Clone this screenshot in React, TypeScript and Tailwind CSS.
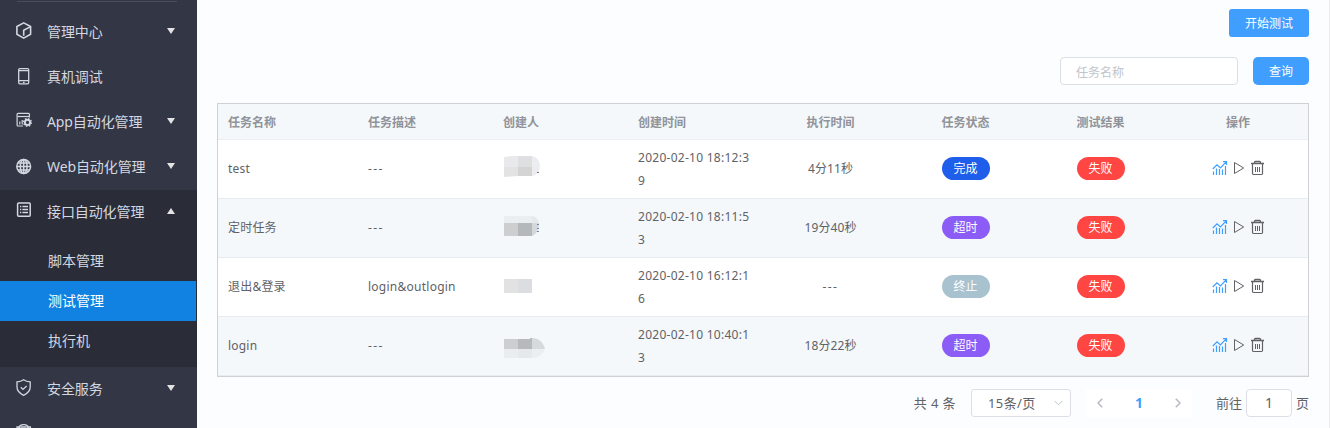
import React from 'react';

interface Task {
  name: string;
  desc: string;
  created: string;
  duration: string;
  status: string;
}

const tasks: Task[] = [
  { name: 'test', desc: '---', created: '2020-02-10 18:12:39', duration: '4分11秒', status: '完成' },
  { name: '定时任务', desc: '---', created: '2020-02-10 18:11:53', duration: '19分40秒', status: '超时' },
  { name: '退出&登录', desc: 'login&outlogin', created: '2020-02-10 16:12:16', duration: '---', status: '终止' },
  { name: 'login', desc: '---', created: '2020-02-10 10:40:13', duration: '18分22秒', status: '超时' },
];

const statusColors: Record<string, string> = {
  完成: 'bg-[#1f5eea]',
  超时: 'bg-[#8b5cf6]',
  终止: 'bg-[#a9c2cf]',
};

const CubeIcon = () => (
  <svg width="16" height="18" viewBox="0 0 16 18" fill="none" stroke="currentColor" strokeWidth="1.6" strokeLinejoin="round">
    <path d="M7.7.9 14.6 4.5V12.3L7.7 16.1.9 12.3V4.5Z" />
    <path d="M14.2 4.9 7.7 8.3V13.7" />
  </svg>
);

const PhoneIcon = () => (
  <svg width="16" height="18" viewBox="0 0 16 18" fill="none" stroke="currentColor" strokeWidth="1.3">
    <rect x="2.7" y="1.6" width="10" height="15.2" rx="1.2" />
    <path d="M3 3.7H12.5M3 13.7H12.5" />
    <path d="M7 15.3H8.6" />
  </svg>
);

const AppIcon = () => (
  <svg width="16" height="18" viewBox="0 0 16 18" fill="none" stroke="currentColor" strokeWidth="1.2">
    <path d="M7 14H2a.9.9 0 0 1-.9-.9V2.2a.9.9 0 0 1 .9-.9H12.5a.9.9 0 0 1 .9.9V5.5" />
    <path d="M1.5 4.5H13.3" />
    <path d="M3.8 9.5V12.5M6.2 8V12.5" />
    <circle cx="11.5" cy="10.4" r="2.6" strokeWidth="1.9" />
    <circle cx="11.5" cy="10.4" r="3.9" strokeWidth="1.3" strokeDasharray="1.53 1.53" />
  </svg>
);

const GlobeIcon = () => (
  <svg width="16" height="18" viewBox="0 0 16 18" fill="none" stroke="currentColor" strokeWidth="1.5">
    <circle cx="7.7" cy="9.5" r="6.9" />
    <ellipse cx="7.7" cy="9.5" rx="3.4" ry="6.9" />
    <path d="M7.7 2.5V16.5M.8 9.5H14.6M2 6H13.4M2 13H13.4" />
  </svg>
);

const ListIcon = () => (
  <svg width="16" height="18" viewBox="0 0 16 18" fill="none" stroke="currentColor" strokeWidth="1.3">
    <rect x="1.6" y=".9" width="12.6" height="13.4" rx="1" strokeWidth="1.5" />
    <path d="M4 4.5H5.3M4 7.5H5.3M4 10.5H5.3M6.4 4.5H12M6.4 7.5H12M6.4 10.5H12" />
  </svg>
);

const ShieldIcon = () => (
  <svg width="16" height="18" viewBox="0 0 16 18" fill="none" stroke="currentColor" strokeWidth="1.3">
    <path d="M7.6.8C9.5 2.2 11.5 2.8 14.2 2.9V8.1C14.2 12 11.8 14.4 7.6 16.4 3.4 14.4 1 12 1 8.1V2.9C3.7 2.8 5.7 2.2 7.6.8Z" />
    <path d="M4.8 8.2 7 10.4 10.6 7" />
  </svg>
);

const RobotIcon = () => (
  <svg width="16" height="18" viewBox="0 0 16 18" fill="none" stroke="currentColor" strokeWidth="1.3">
    <path d="M3 4.5C3 2.3 4.6.7 7.7.7S12.4 2.3 12.4 4.5" />
    <path d="M1 3H3.6V11H1ZM11.8 3H14.4V11H11.8ZM4.6 3H10.8" />
  </svg>
);

const ChartIcon = () => (
  <svg width="16" height="16" viewBox="0 0 16 16" fill="none" stroke="#409eff" strokeWidth="1.2">
    <path d="M1.5 15V11.5M4.5 15V8.5M7.5 15V9M10.5 15V9.5M13.5 15V6" />
    <path d="M.8 9 5 4.8 8.4 8 14 2.2M11 1.6H14.5V5" />
  </svg>
);

const PlayIcon = () => (
  <svg width="12" height="16" viewBox="0 0 12 16" fill="none" stroke="#606266" strokeWidth="1" strokeLinejoin="round">
    <path d="M1.5 2.5 10.7 8 1.5 13.5Z" />
  </svg>
);

const TrashIcon = () => (
  <svg width="15" height="16" viewBox="0 0 15 16" fill="none" stroke="#606266" strokeWidth="1">
    <path d="M1 3.5H14M4.5 3.2V2.4A.9.9 0 0 1 5.4 1.5H9.6A.9.9 0 0 1 10.5 2.4V3.2" strokeWidth="1.3" />
    <path d="M2.5 4V13.4A1.1 1.1 0 0 0 3.6 14.5H11.4A1.1 1.1 0 0 0 12.5 13.4V4" strokeWidth="1.2" />
    <path d="M5.5 7V12M7.5 7V12M9.5 7V12" />
  </svg>
);

// pixelated creator names
const mosaics = [
  <>
    <path d="M1 1 8 0H15V11H1Z" fill="#e9e9eb" />
    <path d="M15 0H29V11H15Z" fill="#dedfe1" />
    <path d="M29 0C34 1 37 5 37 11H29Z" fill="#ecedf0" />
    <path d="M1 11H15V20L1 21Z" fill="#e3e3e3" />
    <path d="M15 11H29V20H15Z" fill="#d4d4d5" />
    <path d="M29 11H37C36 16 34 19 29 20Z" fill="#ececee" />
    <path d="M34 16H36V17H34Z" fill="#5c7894" />
  </>,
  <>
    <path d="M1 1H29V8H1Z" fill="#ebeef1" />
    <path d="M29 1C33 2 35 4 36 8H29Z" fill="#e5e9ed" />
    <path d="M1 8H15V21H1Z" fill="#cdced0" />
    <path d="M15 8H29V21H15Z" fill="#b4b8bb" />
    <path d="M29 8H36C36 14 34 19 29 21Z" fill="#d4d8dd" />
    <path d="M34 9H36V10H34ZM34 13H36V14H34ZM34 16H36V17H34Z" fill="#6f8ba8" />
  </>,
  <>
    <path d="M1 5H15V19H1Z" fill="#e2e2e3" />
    <path d="M15 5H29V19H15Z" fill="#dcdde0" />
  </>,
  <>
    <path d="M1 6H15V16H1Z" fill="#cdced0" />
    <path d="M15 6H27V5H29V16H15Z" fill="#b6babd" />
    <path d="M29 5C36 5 40 9 42 16H29Z" fill="#d6dade" />
    <path d="M1 16H15V25H1Z" fill="#e9edf0" />
    <path d="M15 16H29V25H15Z" fill="#e6e9eb" />
    <path d="M29 16H42C40 22 35 25 29 25Z" fill="#ebeff2" />
  </>,
];

interface MenuProps {
  icon: React.ReactNode;
  label: string;
  arrow?: 'up' | 'down';
}

function MenuItem({ icon, label, arrow }: MenuProps) {
  return (
    <div className="flex h-[45px] shrink-0 items-center pl-4 text-[#d3d7e0]">
      <span className="mb-1 w-[31px]">{icon}</span>
      <span className="flex-1 pb-0.5 text-sm tracking-[-0.1px]">{label}</span>
      {arrow && (
        <svg className="mr-[22px] mb-[3px]" width="8" height="6" viewBox="0 0 8 6" fill="#e3e3e3">
          {arrow === 'down' ? <path d="M0 0H8L4 6Z" /> : <path d="M0 6H8L4 0Z" />}
        </svg>
      )}
    </div>
  );
}

function Tag({ text, color }: { text: string; color: string }) {
  return (
    <span className={`mx-auto flex h-[23px] w-12 items-center justify-center rounded-full text-white ${color}`}>
      {text}
    </span>
  );
}

export default function App() {
  return (
    <div className="flex h-[428px] w-[1330px] overflow-hidden bg-[#fcfdff] font-['Noto_Sans','Noto_Sans_CJK_SC',sans-serif] text-xs text-[#606266]">
      <aside className="flex w-[197px] shrink-0 flex-col overflow-hidden bg-[#333644]">
        <div className="mr-5 mt-px mb-2 ml-[17px] h-px shrink-0 bg-[#4a4d5b]" />
        <MenuItem icon={<CubeIcon />} label="管理中心" arrow="down" />
        <MenuItem icon={<PhoneIcon />} label="真机调试" />
        <MenuItem icon={<AppIcon />} label="App自动化管理" arrow="down" />
        <MenuItem icon={<GlobeIcon />} label="Web自动化管理" arrow="down" />
        <div className="h-[177px] shrink-0 bg-[#2a2d38]">
          <MenuItem icon={<ListIcon />} label="接口自动化管理" arrow="up" />
          <ul className="mt-1.5 mr-px text-sm text-[#d3d7e0]">
            <li className="h-10 pl-12 leading-10">脚本管理</li>
            <li className="h-10 bg-[#1182e2] pl-12 leading-10 text-white">测试管理</li>
            <li className="h-10 pl-12 leading-10">执行机</li>
          </ul>
        </div>
        <MenuItem icon={<ShieldIcon />} label="安全服务" arrow="down" />
        <MenuItem icon={<RobotIcon />} label="" />
      </aside>

      <main className="flex-1 border-r border-[#ececee] pt-[9px] pr-5 pl-5">
        <div className="flex justify-end">
          <button className="h-7 w-20 rounded-[3px] bg-[#409eff] pt-0.5 text-white">开始测试</button>
        </div>
        <div className="mt-5 flex justify-end gap-[15px]">
          <input
            className="h-7 w-[178px] rounded border border-[#dcdfe6] bg-white px-[15px] pt-0.5 placeholder:text-[#c0c4cc]"
            placeholder="任务名称"
          />
          <button className="h-7 w-14 rounded-[5px] bg-[#409eff] pt-0.5 text-white">查询</button>
        </div>

        <div className="mt-[18px] h-[274px] w-[1092px] border border-[#cfd1d4]">
          <table className="w-full table-fixed border-collapse">
            <colgroup>
              <col className="w-[140px]" />
              <col className="w-[135px]" />
              <col className="w-[135px]" />
              <col className="w-[135px]" />
              <col className="w-[135px]" />
              <col className="w-[135px]" />
              <col className="w-[135px]" />
              <col className="w-[140px]" />
            </colgroup>
            <thead>
              <tr className="h-9 bg-[#f4f8fb] text-left text-[#909399] shadow-[inset_0_-1px_0_#ebeef2] *:pt-px">
                <th className="px-2.5">任务名称</th>
                <th className="px-2.5">任务描述</th>
                <th className="px-2.5">创建人</th>
                <th className="px-2.5">创建时间</th>
                <th className="text-center">执行时间</th>
                <th className="text-center">任务状态</th>
                <th className="text-center">测试结果</th>
                <th className="text-center">操作</th>
              </tr>
            </thead>
            <tbody>
              {tasks.map((task, index) => (
                <tr
                  key={task.created}
                  className={`h-[59px] shadow-[inset_0_-1px_0_#e8ecf2] ${index % 2 ? 'bg-[#f4f8fb]' : 'bg-white'}`}
                >
                  <td className="px-2.5 pb-0.5 tracking-[0.2px]">{task.name}</td>
                  <td className={`px-2.5 pb-0.5 ${task.desc === '---' ? 'tracking-[1.4px]' : 'tracking-[0.25px]'}`}>
                    {task.desc}
                  </td>
                  <td className="px-2.5 pb-px">
                    <svg width="44" height="26" viewBox="0 0 44 26">{mosaics[index]}</svg>
                  </td>
                  <td className="px-2.5 pb-0.5 leading-[23px] tracking-[0.27px] break-all">{task.created}</td>
                  <td className={`pb-0.5 text-center ${task.duration === '---' ? 'tracking-[1.4px]' : 'tracking-[0.1px]'}`}>
                    {task.duration}
                  </td>
                  <td className="pb-0.5"><Tag text={task.status} color={statusColors[task.status]} /></td>
                  <td className="pb-0.5"><Tag text="失败" color="bg-[#ff4643]" /></td>
                  <td className="pb-[3px]">
                    <div className="flex items-center justify-center gap-[5px]">
                      <ChartIcon />
                      <PlayIcon />
                      <TrashIcon />
                    </div>
                  </td>
                </tr>
              ))}
            </tbody>
          </table>
        </div>

        <div className="mt-3 flex h-7 items-center justify-end text-[13px]">
          <span className="mr-[15px] pt-px tracking-[0.4px]">共 4 条</span>
          <div className="flex h-7 w-[100px] items-center justify-between rounded-[3px] border border-[#dcdfe6] bg-white pr-[7px] pl-4">
            <span className="pt-px tracking-[0.4px]">15条/页</span>
            <svg width="9" height="6" viewBox="0 0 9 6" fill="none" stroke="#c0c4cc">
              <path d="M.5.8 4.5 4.8 8.5.8" />
            </svg>
          </div>
          <div className="ml-[15px] flex h-7 w-[106px] items-center justify-between bg-white px-[11px]">
            <svg width="6" height="10" viewBox="0 0 6 10" fill="none" stroke="#b8bcc5" strokeWidth="1.6">
              <path d="M5.2.7 1 5 5.2 9.3" />
            </svg>
            <span className="text-sm font-bold text-[#409eff]">1</span>
            <svg width="6" height="10" viewBox="0 0 6 10" fill="none" stroke="#b8bcc5" strokeWidth="1.6">
              <path d="M.8.7 5 5 .8 9.3" />
            </svg>
          </div>
          <span className="ml-6 pt-0.5">前往</span>
          <div className="mx-1 flex h-7 w-[46px] items-center justify-center rounded border border-[#dcdfe6] bg-white text-sm">
            1
          </div>
          <span className="pt-0.5">页</span>
        </div>
      </main>
    </div>
  );
}
